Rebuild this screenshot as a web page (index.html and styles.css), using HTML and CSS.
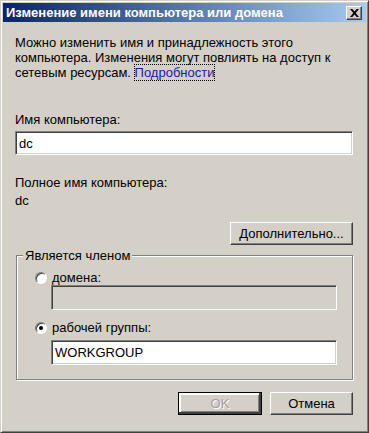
FILE: index.html
```html
<!DOCTYPE html>
<html lang="ru">
<head>
    <meta charset="UTF-8">
    <title>Изменение имени компьютера или домена</title>
    <link rel="stylesheet" href="styles.css">
</head>
<body>
    <div class="window">
        <div class="titlebar">
            <span class="title">Изменение имени компьютера или домена</span>
            <span class="close">
                <svg width="9" height="8" viewBox="0 0 9 8"><path d="M0 0h2.3l2.2 2.6 2.2-2.6h2.3l-3.3 4 3.3 4h-2.3l-2.2-2.6-2.2 2.6h-2.3l3.3-4z" fill="#000"/></svg>
            </span>
        </div>

        <div class="content">
            <p class="intro">Можно изменить имя и принадлежность этого компьютера. Изменения могут повлиять на доступ к сетевым ресурсам. <a href="#" class="link">Подробности</a></p>

            <div class="label label-name">Имя компьютера:</div>
            <div class="field">dc</div>

            <div class="label label-full">Полное имя компьютера:</div>
            <div class="label">dc</div>

            <div class="row-right row-more">
                <button class="btn btn-more">Дополнительно...</button>
            </div>

            <fieldset class="group">
                <legend>Является членом</legend>
                <div class="radio-row">
                    <span class="radio"></span>
                    <span>домена:</span>
                </div>
                <div class="field field-sub disabled"></div>
                <div class="radio-row radio-row-2">
                    <span class="radio checked"></span>
                    <span>рабочей группы:</span>
                </div>
                <div class="field field-sub field-last">WORKGROUP</div>
            </fieldset>

            <div class="row-right row-buttons">
                <button class="btn btn-ok" disabled>OK</button>
                <button class="btn btn-cancel">Отмена</button>
            </div>
        </div>
    </div>
</body>
</html>
```

FILE: styles.css
```css
body {
    margin: 0;
    font-family: "Liberation Sans", Arial, sans-serif;
    font-size: 13px;
    color: #000;
    background: #d4d0c8;
}
.window {
    width: 369px;
    height: 433px;
    box-sizing: border-box;
    padding: 2px;
    background: #d4d0c8;
    border-top: 1px solid #d4d0c8;
    border-left: 1px solid #d4d0c8;
    border-right: 1px solid #404040;
    border-bottom: 1px solid #404040;
    box-shadow: inset 1px 1px #fff, inset -1px -1px #808080;
}
.titlebar {
    height: 19px;
    display: flex;
    align-items: center;
    justify-content: space-between;
    padding: 0 4px 0 3px;
    background: linear-gradient(to right, #0a246a, #a6caf0);
}
.title {
    color: #fff;
    font-weight: bold;
    font-size: 13px;
}
.close {
    width: 16px;
    height: 14px;
    box-sizing: border-box;
    display: flex;
    align-items: center;
    justify-content: center;
    background: #d4d0c8;
    border: 1px solid;
    border-color: #fff #404040 #404040 #fff;
    box-shadow: inset -1px -1px #808080;
}
.content {
    padding: 0 13px 0 12px;
    line-height: 15px;
}
.intro {
    margin: 13px 0 0;
}
.link {
    color: #1a1aa6;
    text-decoration: none;
    outline: 1px dotted #000;
    outline-offset: 0;
}
.label-name {
    margin-top: 32px;
}
.label-full {
    margin-top: 20px;
}
.label + .label {
    margin-top: 3px;
}
.field {
    height: 24px;
    box-sizing: border-box;
    margin-top: 4px;
    padding: 4px 3px;
    background: #fff;
    border: 1px solid;
    border-color: #808080 #fff #fff #808080;
    box-shadow: inset 1px 1px #404040, inset -1px -1px #d4d0c8;
}
.field.disabled {
    background: #d4d0c8;
}
.row-right {
    display: flex;
    justify-content: flex-end;
    gap: 8px;
}
.row-more {
    margin-top: 14px;
}
.btn {
    height: 23px;
    box-sizing: border-box;
    font-family: inherit;
    font-size: 13px;
    color: #000;
    background: #d4d0c8;
    border: 1px solid;
    border-color: #fff #404040 #404040 #fff;
    box-shadow: inset -1px -1px #808080, inset 1px 1px #d4d0c8;
    padding: 0;
}
.btn-more {
    width: 123px;
}
.btn-ok {
    width: 84px;
    color: #a0a0a0;
    text-shadow: 1px 1px #fff;
    outline: 1px solid #000;
    outline-offset: -1px;
    box-shadow: inset -2px -2px #404040, inset 2px 2px #fff, inset -3px -3px #808080;
}
.btn-cancel {
    width: 83px;
}
.group {
    margin: 3px 0 0 1px;
    padding: 7px 15px 14px 6px;
    border: 1px solid #808080;
    box-shadow: inset 1px 1px #fff, 1px 1px #fff;
}
.group legend {
    margin-left: 0;
    padding: 0 2px;
    background: #d4d0c8;
}
.radio-row {
    display: flex;
    align-items: center;
    gap: 5px;
    margin-left: 12px;
}
.radio-row-2 {
    margin-top: 10px;
}
.radio {
    width: 12px;
    height: 12px;
    box-sizing: border-box;
    border-radius: 50%;
    background: #fff;
    border: 1px solid;
    border-color: #808080 #fff #fff #808080;
    box-shadow: inset 1px 1px #404040;
    display: flex;
    align-items: center;
    justify-content: center;
}
.radio.checked::after {
    content: "";
    width: 4px;
    height: 4px;
    border-radius: 50%;
    background: #000;
}
.field-sub {
    margin: 0 0 0 28px;
    height: 25px;
}
.field-last {
    margin-top: 5px;
}
.row-buttons {
    margin-top: 12px;
}
```
